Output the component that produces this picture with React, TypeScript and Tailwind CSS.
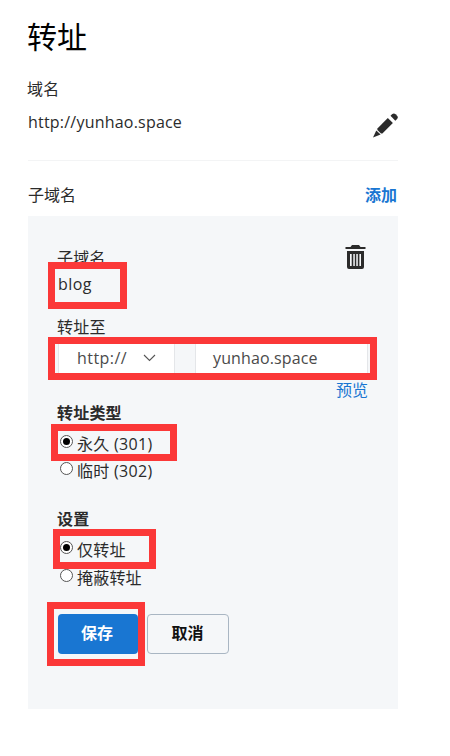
import React from "react";

function Mark({ className }: { className: string }) {
  return <div className={`pointer-events-none absolute border-[7px] border-[#fb3838] ${className}`} />;
}

function Radio({ checked, label, code, className = "" }: { checked?: boolean; label: string; code?: string; className?: string }) {
  return (
    <label className={`flex h-6 w-fit items-center pl-0.5 ${className}`}>
      <span className="mb-[5px] flex size-[13px] shrink-0 items-center justify-center rounded-full border border-[#555] bg-white">
        {checked && <span className="size-[7px] rounded-full bg-black" />}
      </span>
      <span className="ml-1 whitespace-nowrap tracking-[0.2px]">
        {label}
        {code && <span className="tracking-[0.35px]"> {code}</span>}
      </span>
    </label>
  );
}

function Pencil() {
  return (
    <svg width="25" height="25" viewBox="0 0 25 25" fill="#2b2b2b">
      <path d="M4.4 15.5 14.8 5.1 19.9 10 9.4 20.4H8L4.4 16.9Z" />
      <path d="M3.3 17.4 7.6 21.5 0 24.4Z" />
      <path d="M17.5 2.8 19.3 1Q20.9-.3 22.6 1.2L24.3 3Q25.5 4.4 24.1 5.9L22.3 7.7Z" />
    </svg>
  );
}

function Trash() {
  return (
    <svg width="21" height="24" viewBox="0 0 21 24" fill="#2b2b2b">
      <path d="M5.5 2 7 0h7l1.5 2H20.5v2H.5V2Z" />
      <path
        fillRule="evenodd"
        d="M2 6H19V22Q19 24 17 24H4Q2 24 2 22ZM5 9V21H6.7V9ZM8.3 9V21H9.8V9ZM11.3 9V21H12.8V9ZM14.4 9V21H16V9Z"
      />
    </svg>
  );
}

export default function App() {
  return (
    <main className="relative h-[756px] w-[450px] overflow-hidden bg-white pl-7 font-['Open_Sans','Noto_Sans_CJK_SC',sans-serif] text-base leading-6 text-[#2b2b2b]">
      <div className="w-[370px]">
        <h1 className="-ml-px h-[77px] pt-[17px] text-[30px] leading-10 text-black">转址</h1>
        <div className="-ml-px h-[33px] tracking-[0.3px]">域名</div>
        <div className="flex h-[51px] justify-between border-b border-[#f3f4f5]">
          <span className="tracking-[0.21px]">http://yunhao.space</span>
          <button className="mt-[3px] size-[25px]"><Pencil /></button>
        </div>
        <div className="flex h-[55px] items-start justify-between pt-[22px]">
          <span>子域名</span>
          <a className="mr-px font-bold text-[#1976d2]">添加</a>
        </div>
        <section className="h-[493px] bg-[#f5f7f9] px-[30px] pt-[30px]">
          <div className="flex h-[26px] justify-between">
            <span className="-ml-px tracking-[0.25px]">子域名</span>
            <button className="mr-0.5 -mt-px h-6 w-[21px]"><Trash /></button>
          </div>
          <div className="h-[43px] tracking-[0.4px]">blog</div>
          <div className="-ml-px h-[23px] tracking-[0.3px]">转址至</div>
          <div className="flex h-10 gap-5 text-[#4a4a4a]">
            <div className="flex w-[117px] items-center border border-[#e4e6e9] bg-white pl-[18px]">
              <span className="w-[66px] tracking-[0.45px]">http://</span>
              <svg width="13" height="8" viewBox="0 0 13 8" fill="none" stroke="#555" strokeWidth="1.1">
                <path d="M1 1 6.5 6.5 12 1" />
              </svg>
            </div>
            <div className="flex w-[173px] items-center border border-[#e4e6e9] bg-white pl-[17px] tracking-[0.12px]">
              yunhao.space
            </div>
          </div>
          <div className="h-[22px] text-right text-[#1976d2]">预览</div>
          <div className="-ml-px h-8 pt-px font-bold tracking-[0.2px]">转址类型</div>
          <Radio checked label="永久" code="(301)" />
          <Radio label="临时" code="(302)" className="mt-[3px]" />
          <div className="-ml-px mt-6 h-[31px] font-bold tracking-[0.3px]">设置</div>
          <Radio checked label="仅转址" />
          <Radio label="掩蔽转址" className="mt-1" />
          <div className="mt-6 flex gap-[9px] font-bold">
            <button className="h-10 w-20 rounded bg-[#1976d2] pr-0.5 pb-0.5 text-white">保存</button>
            <button className="h-10 w-[82px] rounded border border-[#a9b6c3] pr-px pb-0.5 text-[#111]">取消</button>
          </div>
        </section>
      </div>
      <Mark className="left-12 top-[262px] h-[47px] w-[79px]" />
      <Mark className="left-12 top-[337px] h-[43px] w-[329px]" />
      <Mark className="left-[51px] top-[424px] h-[37px] w-[126px]" />
      <Mark className="left-[53px] top-[529px] h-10 w-[103px]" />
      <Mark className="left-[47px] top-[602px] h-16 w-[98px]" />
    </main>
  );
}
